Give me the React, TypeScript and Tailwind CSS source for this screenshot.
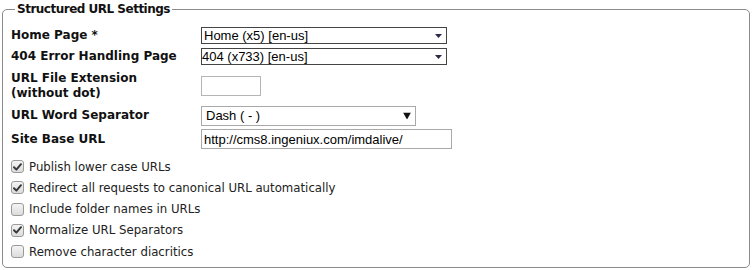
import React from "react";

// Small down arrow used by the compact page pickers
function TinyArrow() {
  return (
    <svg width="7" height="4" viewBox="0 0 7 4" className="absolute right-[5px] top-1/2 -translate-y-1/2 pointer-events-none">
      <path d="M0 0h7L3.5 4z" fill="#2a2a44" />
    </svg>
  );
}

function BigArrow() {
  return (
    <svg width="8" height="7" viewBox="0 0 8 7" className="absolute right-[5px] top-1/2 -translate-y-1/2 pointer-events-none">
      <path d="M0 0h8L4 7z" fill="#111" />
    </svg>
  );
}

const CHECKS = [
  { label: "Publish lower case URLs", checked: true },
  { label: "Redirect all requests to canonical URL automatically", checked: true },
  { label: "Include folder names in URLs", checked: false },
  { label: "Normalize URL Separators", checked: true },
  { label: "Remove character diacritics", checked: false },
];

function Check({ checked }: { checked: boolean }) {
  return (
    <span className="w-[13px] h-[13px] rounded-[3px] border border-[#9a9a9a] bg-gradient-to-b from-[#f4f4f4] to-[#dcdcdc] flex items-center justify-center shrink-0">
      {checked && (
        <svg width="9" height="8" viewBox="0 0 9 8">
          <path d="M1 4.2 3.4 6.6 8 1.2" stroke="#3a3a3a" strokeWidth="2" fill="none" strokeLinecap="round" strokeLinejoin="round" />
        </svg>
      )}
    </span>
  );
}

export default function App() {
  return (
    <div className="w-[752px] h-[270px] bg-white px-[2px] pt-[1px] font-['DejaVu_Sans',sans-serif] text-[#111]">
      <fieldset className="h-[267px] border border-[#8a8a8a] rounded-[5px] pl-[8px] pr-2">
        <legend className="ml-[4px] px-[2px] text-[12px] font-bold leading-[16px] tracking-[-0.5px]">Structured URL Settings</legend>

        {/* Settings rows */}
        <div className="mt-[8px] flex flex-col text-[12px] font-bold leading-[15px]">
          <div className="h-[21px] flex items-center">
            <label className="w-[190px] shrink-0">Home Page *</label>
            <div className="relative">
              <select className="appearance-none w-[246px] h-[17px] border border-[#444] bg-white pl-[2px] font-['Liberation_Sans',Arial,sans-serif] font-normal text-[13px] leading-[15px] text-black outline-none">
                <option>Home (x5) [en-us]</option>
              </select>
              <TinyArrow />
            </div>
          </div>
          <div className="h-[21px] flex items-center">
            <label className="w-[190px] shrink-0">404 Error Handling Page</label>
            <div className="relative">
              <select className="appearance-none w-[246px] h-[17px] border border-[#444] bg-white pl-[0px] font-['Liberation_Sans',Arial,sans-serif] font-normal text-[13px] leading-[15px] text-black outline-none">
                <option>404 (x733) [en-us]</option>
              </select>
              <TinyArrow />
            </div>
          </div>
          <div className="h-[37px] flex items-center">
            <label className="w-[190px] shrink-0">
              URL File Extension
              <br />
              (without dot)
            </label>
            <input className="w-[60px] h-[20px] border border-[#b5b5b5] bg-white outline-none" />
          </div>
          <div className="h-[23px] flex items-center">
            <label className="w-[190px] shrink-0">URL Word Separator</label>
            <div className="relative">
              <select className="appearance-none w-[215px] h-[20px] border border-[#a9a9a9] bg-white pl-[4px] font-['Liberation_Sans',Arial,sans-serif] font-normal text-[13px] text-black outline-none">
                <option>Dash ( - )</option>
              </select>
              <BigArrow />
            </div>
          </div>
          <div className="h-[24px] flex items-center">
            <label className="w-[190px] shrink-0">Site Base URL</label>
            <input
              defaultValue="http://cms8.ingeniux.com/imdalive/"
              className="w-[251px] h-[20px] border border-[#a9a9a9] bg-white px-[2px] font-['Liberation_Sans',Arial,sans-serif] font-normal text-[13px] text-black outline-none"
            />
          </div>
        </div>

        {/* Option checkboxes */}
        <div className="mt-[5px] flex flex-col text-[11.75px] leading-[14px] text-[#222]">
          {CHECKS.map((c) => (
            <div key={c.label} className="h-[21.25px] flex items-center gap-[5px]">
              <Check checked={c.checked} />
              <span>{c.label}</span>
            </div>
          ))}
        </div>
      </fieldset>
    </div>
  );
}
